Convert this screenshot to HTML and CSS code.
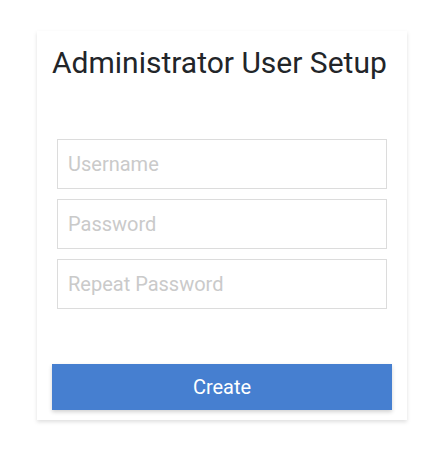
FILE: index.html
```html
<!DOCTYPE html>
<html lang="en">
<head>
<meta charset="utf-8">
<title>Administrator User Setup</title>
<link rel="stylesheet" href="styles.css">
</head>
<body>
<div class="card">
  <h1 class="title">Administrator User Setup</h1>
  <form class="form">
    <div class="fields">
      <input class="field" type="text" placeholder="Username">
      <input class="field" type="password" placeholder="Password">
      <input class="field" type="password" placeholder="Repeat Password">
    </div>
    <button class="btn" type="button">Create</button>
  </form>
</div>
</body>
</html>
```
FILE: styles.css
```css
html, body {
  margin: 0;
  padding: 0;
  background: #ffffff;
}
body {
  font-family: Roboto, "Liberation Sans", sans-serif;
  color: #212529;
  padding-bottom: 33px;
}
.card {
  box-sizing: border-box;
  width: 370px;
  margin: 31px 0 0 37px;
  padding: 14px 15px 10px;
  background: #fff;
  box-shadow: 0 2px 4px rgba(0, 0, 0, 0.13);
}
.title {
  margin: 0;
  font-size: 30px;
  font-weight: 400;
  line-height: 36px;
  color: #222529;
  white-space: nowrap;
}
.form {
  display: flex;
  flex-direction: column;
  margin-top: 58px;
}
.fields {
  display: flex;
  flex-direction: column;
  gap: 10px;
  padding: 0 5px;
}
.field {
  box-sizing: border-box;
  width: 100%;
  height: 50px;
  margin: 0;
  padding: 0 10px;
  border: 1px solid #dcdcdc;
  border-radius: 0;
  font-family: Roboto, "Liberation Sans", sans-serif;
  font-size: 20px;
  color: #333;
  outline: none;
}
.field::placeholder {
  color: #cacaca;
}
.btn {
  box-sizing: border-box;
  height: 46px;
  margin-top: 55px;
  border: 0;
  border-radius: 0;
  background: #467fd0;
  color: #fff;
  font-family: Roboto, "Liberation Sans", sans-serif;
  font-size: 20px;
  box-shadow: 0 2px 4px rgba(0, 0, 0, 0.18);
}
```
